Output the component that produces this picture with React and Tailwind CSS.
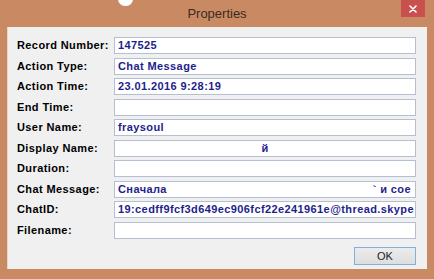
const rows = [
  { label: 'Record Number:', value: '147525' },
  { label: 'Action Type:', value: 'Chat Message' },
  { label: 'Action Time:', value: '23.01.2016 9:28:19' },
  { label: 'End Time:', value: '' },
  { label: 'User Name:', value: 'fraysoul' },
  { label: 'Display Name:', value: 'й', center: true },
  { label: 'Duration:', value: '' },
  { label: 'Chat Message:', value: 'Сначала', tail: '` и сое' },
  { label: 'ChatID:', value: '19:cedff9fcf3d649ec906fcf22e241961e@thread.skype' },
  { label: 'Filename:', value: '' },
];

function Field({ row }) {
  return (
    <div className="flex items-center h-[17px]">
      <div className="w-[97px] shrink-0 text-[11px] font-bold tracking-[0.4px] text-black leading-none">
        {row.label}
      </div>
      <div
        className={`w-[302px] h-[17px] bg-white border border-[#b4c0d2] flex items-center px-[3px] overflow-hidden whitespace-nowrap text-[11px] font-bold tracking-[0.4px] text-[#1e1e8c] leading-none ${
          row.center ? 'justify-center' : 'justify-between'
        }`}
      >
        <span>{row.value}</span>
        {row.tail && <span className="pr-[1px]">{row.tail}</span>}
      </div>
    </div>
  );
}

export default function App() {
  return (
    <div
      className="w-[434px] h-[279px] bg-[#c98a63] flex flex-col relative overflow-hidden"
      style={{ fontFamily: '"Liberation Sans", Arial, sans-serif' }}
    >
      <div className="absolute left-[118px] top-[-8px] w-[15px] h-[14px] rounded-full bg-white" />
      <div className="h-[27px] shrink-0 flex items-center justify-center relative">
        <span className="text-[13px] text-[#3b2a20] pt-[1px]">Properties</span>
        <div className="absolute right-[9px] top-0 w-[24px] h-[17px] bg-[#c8514e] flex items-center justify-center">
          <svg width="8" height="8" viewBox="0 0 8 8">
            <path d="M1 1 L7 7 M7 1 L1 7" stroke="#fff" strokeWidth="1.6" strokeLinecap="round" />
          </svg>
        </div>
      </div>
      <div className="mx-[7px] mb-[10px] flex-1 bg-[#f0f0f0] border-l border-[#e6d6cb] flex flex-col pt-[10px] pl-[9px] pr-[10px]">
        <div className="flex flex-col gap-[3.5px]">
          {rows.map((row) => (
            <Field key={row.label} row={row} />
          ))}
        </div>
        <div className="flex justify-end mt-[8.5px] pr-[1px]">
          <button className="w-[62px] h-[18px] border border-[#7eb0e0] bg-gradient-to-b from-[#ececec] to-[#dedede] text-[11px] text-[#222] leading-none">
            OK
          </button>
        </div>
      </div>
    </div>
  );
}
